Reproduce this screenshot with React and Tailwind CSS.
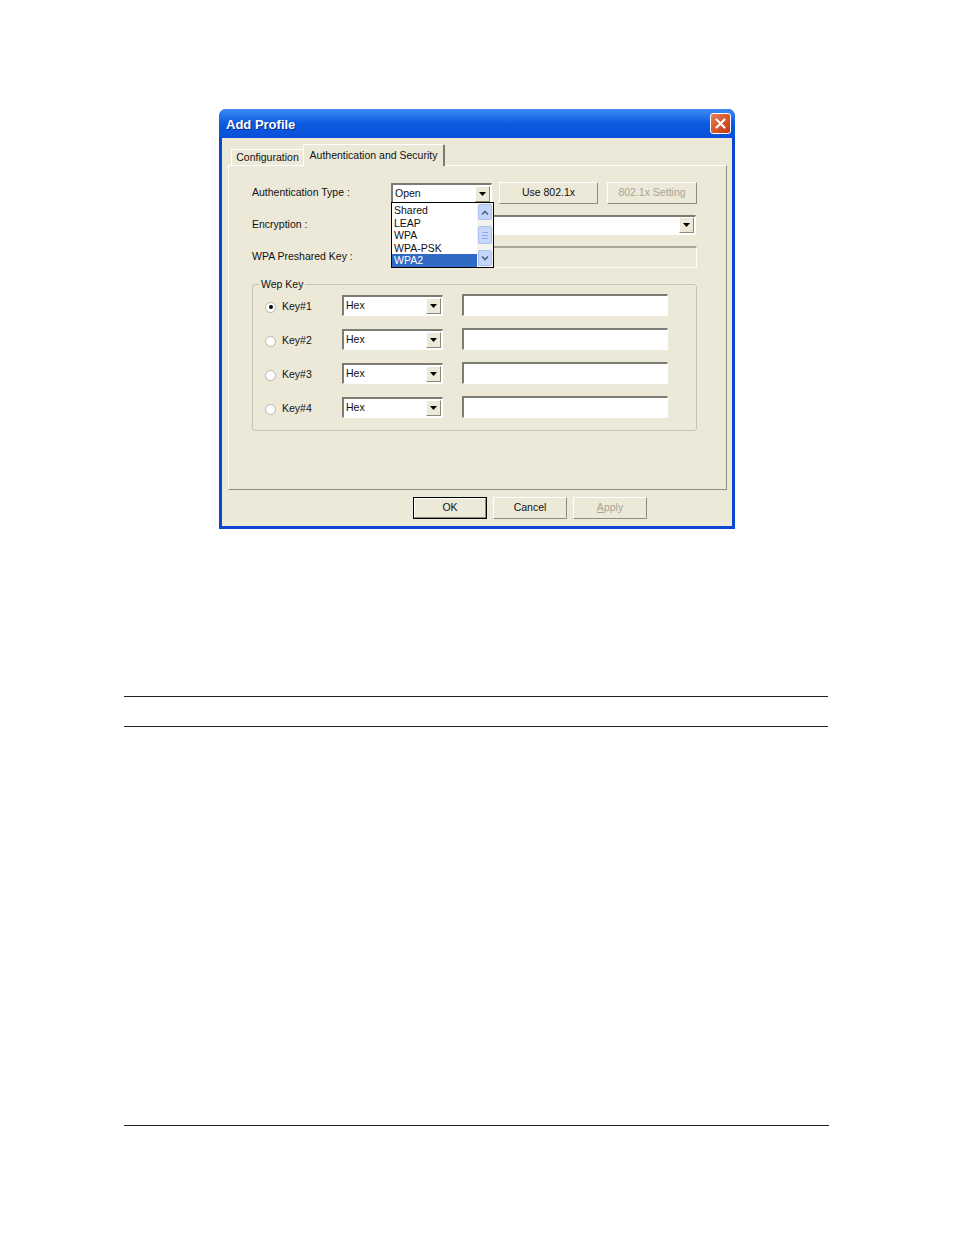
const FONT = { fontFamily: '"Liberation Sans", Arial, sans-serif' };

function Arrow({ className = "" }) {
  return (
    <svg width="7" height="4" viewBox="0 0 7 4" className={className}>
      <path d="M0 0h7L3.5 4z" fill="#000" />
    </svg>
  );
}

function Combo({ value, className = "" }) {
  return (
    <div
      className={`flex items-center h-[20px] bg-white border-t-2 border-l-2 border-t-[#7c7b74] border-l-[#7c7b74] border-b border-r border-b-white border-r-white ${className}`}
    >
      <span className="flex-1 pl-[2px] text-[10.5px] leading-none text-[#111]">{value}</span>
      <div className="w-[15px] h-[16px] mr-[1px] flex items-center justify-center bg-[#ece9d8] border border-t-white border-l-white border-b-[#8a8978] border-r-[#8a8978]">
        <Arrow />
      </div>
    </div>
  );
}

function Field({ className = "", disabled }) {
  return (
    <div
      className={`h-[22px] border-t-2 border-l-2 border-t-[#7c7b74] border-l-[#7c7b74] border-b border-r border-b-white border-r-white ${disabled ? "bg-[#ece9d8]" : "bg-white"} ${className}`}
    />
  );
}

function Btn({ children, className = "", disabled, isDefault }) {
  return (
    <div
      className={`h-[22px] flex items-center justify-center text-[10.5px] bg-[#ece9d8] ${isDefault ? "border border-black" : ""} ${className}`}
    >
      <div className="w-full h-full flex items-center justify-center border border-t-white border-l-white border-b-[#8d8c80] border-r-[#8d8c80]">
        <span className={disabled ? "text-[#a7a596]" : "text-[#111]"}>{children}</span>
      </div>
    </div>
  );
}

function Radio({ checked }) {
  return (
    <div className="w-[11px] h-[11px] rounded-full border border-[#b8b6aa] bg-white flex items-center justify-center">
      {checked && <div className="w-[4px] h-[4px] rounded-full bg-black" />}
    </div>
  );
}

function DropList() {
  const items = ["Shared", "LEAP", "WPA", "WPA-PSK", "WPA2"];
  return (
    <div className="absolute left-[162px] top-[36px] w-[103px] h-[66px] bg-white border border-black flex z-10">
      <div className="flex-1 flex flex-col pt-[1px]">
        {items.map((t) => (
          <div
            key={t}
            className={`h-[12.6px] pl-[2px] text-[10.5px] leading-[12.6px] ${t === "WPA2" ? "bg-[#316ac5] text-white" : "text-[#111]"}`}
          >
            {t}
          </div>
        ))}
      </div>
      <div className="w-[16px] flex flex-col bg-[#f4f3ee]">
        <div className="h-[16px] m-[1px] rounded-[2px] bg-[#c5d5fa] border border-[#a9bfee] flex items-center justify-center">
          <svg width="8" height="5" viewBox="0 0 8 5">
            <path d="M1 4.5L4 1.5l3 3" stroke="#4d6185" strokeWidth="1.6" fill="none" />
          </svg>
        </div>
        <div className="flex-1 flex items-center">
          <div className="w-full h-[18px] mx-[1px] rounded-[2px] bg-[#c8d7fb] border border-[#a9bfee] flex flex-col items-center justify-center gap-[2px]">
            <div className="w-[6px] h-px bg-[#8faaf0]" />
            <div className="w-[6px] h-px bg-[#8faaf0]" />
            <div className="w-[6px] h-px bg-[#8faaf0]" />
          </div>
        </div>
        <div className="h-[16px] m-[1px] rounded-[2px] bg-[#c5d5fa] border border-[#a9bfee] flex items-center justify-center">
          <svg width="8" height="5" viewBox="0 0 8 5">
            <path d="M1 0.5L4 3.5l3-3" stroke="#4d6185" strokeWidth="1.6" fill="none" />
          </svg>
        </div>
      </div>
    </div>
  );
}

function KeyRow({ n, checked }) {
  return (
    <div className="flex items-center h-[22px]">
      <div className="ml-[12px] translate-y-[2px]">
        <Radio checked={checked} />
      </div>
      <span className="ml-[6px] w-[60px] text-[10.5px] text-[#111] translate-y-[2px]">Key#{n}</span>
      <Combo value="Hex" className="w-[101px] h-[21px]" />
      <Field className="ml-[19px] w-[206px]" />
    </div>
  );
}

function Dialog() {
  return (
    <div className="ml-[219px] w-[516px] h-[420px] flex flex-col bg-[#0b48d1] rounded-t-[7px] px-[3px] pb-[3px]" style={FONT}>
      <div className="h-[29px] -mx-[3px] pl-[7px] pr-[4px] pt-[2px] rounded-t-[7px] flex items-center justify-between bg-gradient-to-b from-[#3d8af4] via-[#0b5ae0] to-[#0a50d8]">
        <span className="text-white font-bold text-[13px] [text-shadow:1px_1px_0_#0a2a8a]">Add Profile</span>
        <div className="w-[21px] h-[21px] -mt-[2px] rounded-[3px] border border-white bg-gradient-to-br from-[#e8805c] via-[#d9552c] to-[#c03a12] flex items-center justify-center">
          <svg width="11" height="11" viewBox="0 0 11 11">
            <path d="M1.5 1.5l8 8M9.5 1.5l-8 8" stroke="#fff" strokeWidth="2.2" strokeLinecap="round" />
          </svg>
        </div>
      </div>
      <div className="flex-1 bg-[#ece9d8] flex flex-col">
        <div className="flex items-end h-[27px] pl-[9px]">
          <div className="h-[16px] w-[72px] flex items-center justify-center text-[10.5px] text-[#111] border-t border-l border-t-white border-l-white rounded-tl-[2px]">
            Configuration
          </div>
          <div className="h-[22px] w-[142px] flex items-start pt-[3px] justify-center text-[10.5px] text-[#111] bg-[#ece9d8] border-t border-l border-r-2 border-t-white border-l-white border-r-[#7d7c70] rounded-t-[2px] -mb-px relative z-[1]">
            Authentication and Security
          </div>
        </div>
        <div className="relative ml-[6px] w-[499px] h-[325px] border border-t-white border-l-white border-b-[#8d8c80] border-r-[#8d8c80] pl-[23px]">
          <div className="flex items-center h-[22px] mt-[16px]">
            <span className="w-[139px] text-[10.5px] text-[#111]">Authentication Type :</span>
            <Combo value="Open" className="w-[101px]" />
            <Btn className="ml-[7px] w-[99px]">Use 802.1x</Btn>
            <Btn className="ml-[9px] w-[90px]" disabled>802.1x Setting</Btn>
          </div>
          <div className="flex items-center h-[19px] mt-[11px]">
            <span className="w-[139px] text-[10.5px] text-[#111]">Encryption :</span>
            <Combo value="" className="w-[305px] h-[19px]" />
          </div>
          <div className="flex items-center h-[22px] mt-[12px]">
            <span className="w-[139px] text-[10.5px] text-[#111]">WPA Preshared Key :</span>
            <Field disabled className="w-[306px] border-t-[#a8a79a] border-l-[#a8a79a]" />
          </div>
          <div className="relative mt-[16px] w-[445px] h-[147px] border border-[#c6c4b6] rounded-[3px] pt-[9px] flex flex-col gap-[12px]">
            <span className="absolute -top-[8px] left-[6px] px-[2px] bg-[#ece9d8] text-[10.5px] text-[#111]">Wep Key</span>
            <KeyRow n={1} checked />
            <KeyRow n={2} />
            <KeyRow n={3} />
            <KeyRow n={4} />
          </div>
          <DropList />
        </div>
        <div className="flex mt-[7px] ml-[191px] gap-[6px]">
          <Btn isDefault className="w-[74px]">OK</Btn>
          <Btn className="w-[74px]">Cancel</Btn>
          <Btn disabled className="w-[74px]">
            <span className="underline">A</span>pply
          </Btn>
        </div>
      </div>
    </div>
  );
}

export default function App() {
  return (
    <div className="min-h-[1235px] bg-white pt-[109px]">
      <Dialog />
      <div className="ml-[124px] w-[704px] mt-[167px] border-t border-[#222]" />
      <div className="ml-[124px] w-[704px] mt-[29px] border-t border-[#222]" />
      <div className="ml-[124px] w-[705px] mt-[398px] border-t border-[#222]" />
    </div>
  );
}
